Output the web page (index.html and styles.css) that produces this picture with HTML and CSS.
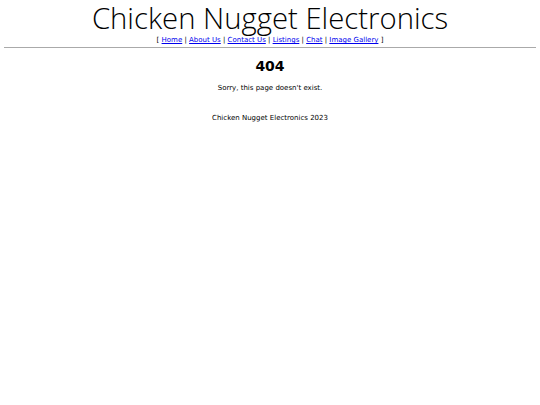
FILE: index.html
```
<!DOCTYPE html>
<html>
<head>
<meta charset="utf-8">
<link rel="stylesheet" href="styles.css">
</head>
<body>
<header class="site-header">
<h1 class="site-title">Chicken Nugget Electronics</h1>
<nav class="site-nav">[ <a href="#">Home</a> | <a href="#">About Us</a> | <a href="#">Contact Us</a> | <a href="#">Listings</a> | <a href="#">Chat</a> | <a href="#">Image Gallery</a> ]</nav>
</header>
<hr class="rule">
<main class="content">
<h2 class="code">404</h2>
<p class="msg">Sorry, this page doesn't exist.</p>
</main>
<footer class="footer">Chicken Nugget Electronics 2023</footer>
</body>
</html>
```
FILE: styles.css
```
body {
  margin: 0 4px 4px;
  font-family: "DejaVu Sans", Verdana, sans-serif;
  font-size: 7px;
  color: #000;
  background: #fff;
  text-align: center;
}
.site-title {
  font-family: "Open Sans", sans-serif;
  font-weight: 300;
  font-size: 29.3px;
  line-height: 36px;
  margin: 0;
}
.site-nav {
  font-size: 7px;
  line-height: 9px;
  margin-top: 0;
}
.site-nav a { color: #00e; }
.rule {
  border: none;
  border-top: 1px solid #aaa;
  margin: 2px 0 0;
}
.code {
  font-size: 14px;
  line-height: 16px;
  margin: 10px 0 0;
}
.msg { margin: 10px 0 0; line-height: 9px; }
.footer { margin-top: 21px; line-height: 9px; }
```
